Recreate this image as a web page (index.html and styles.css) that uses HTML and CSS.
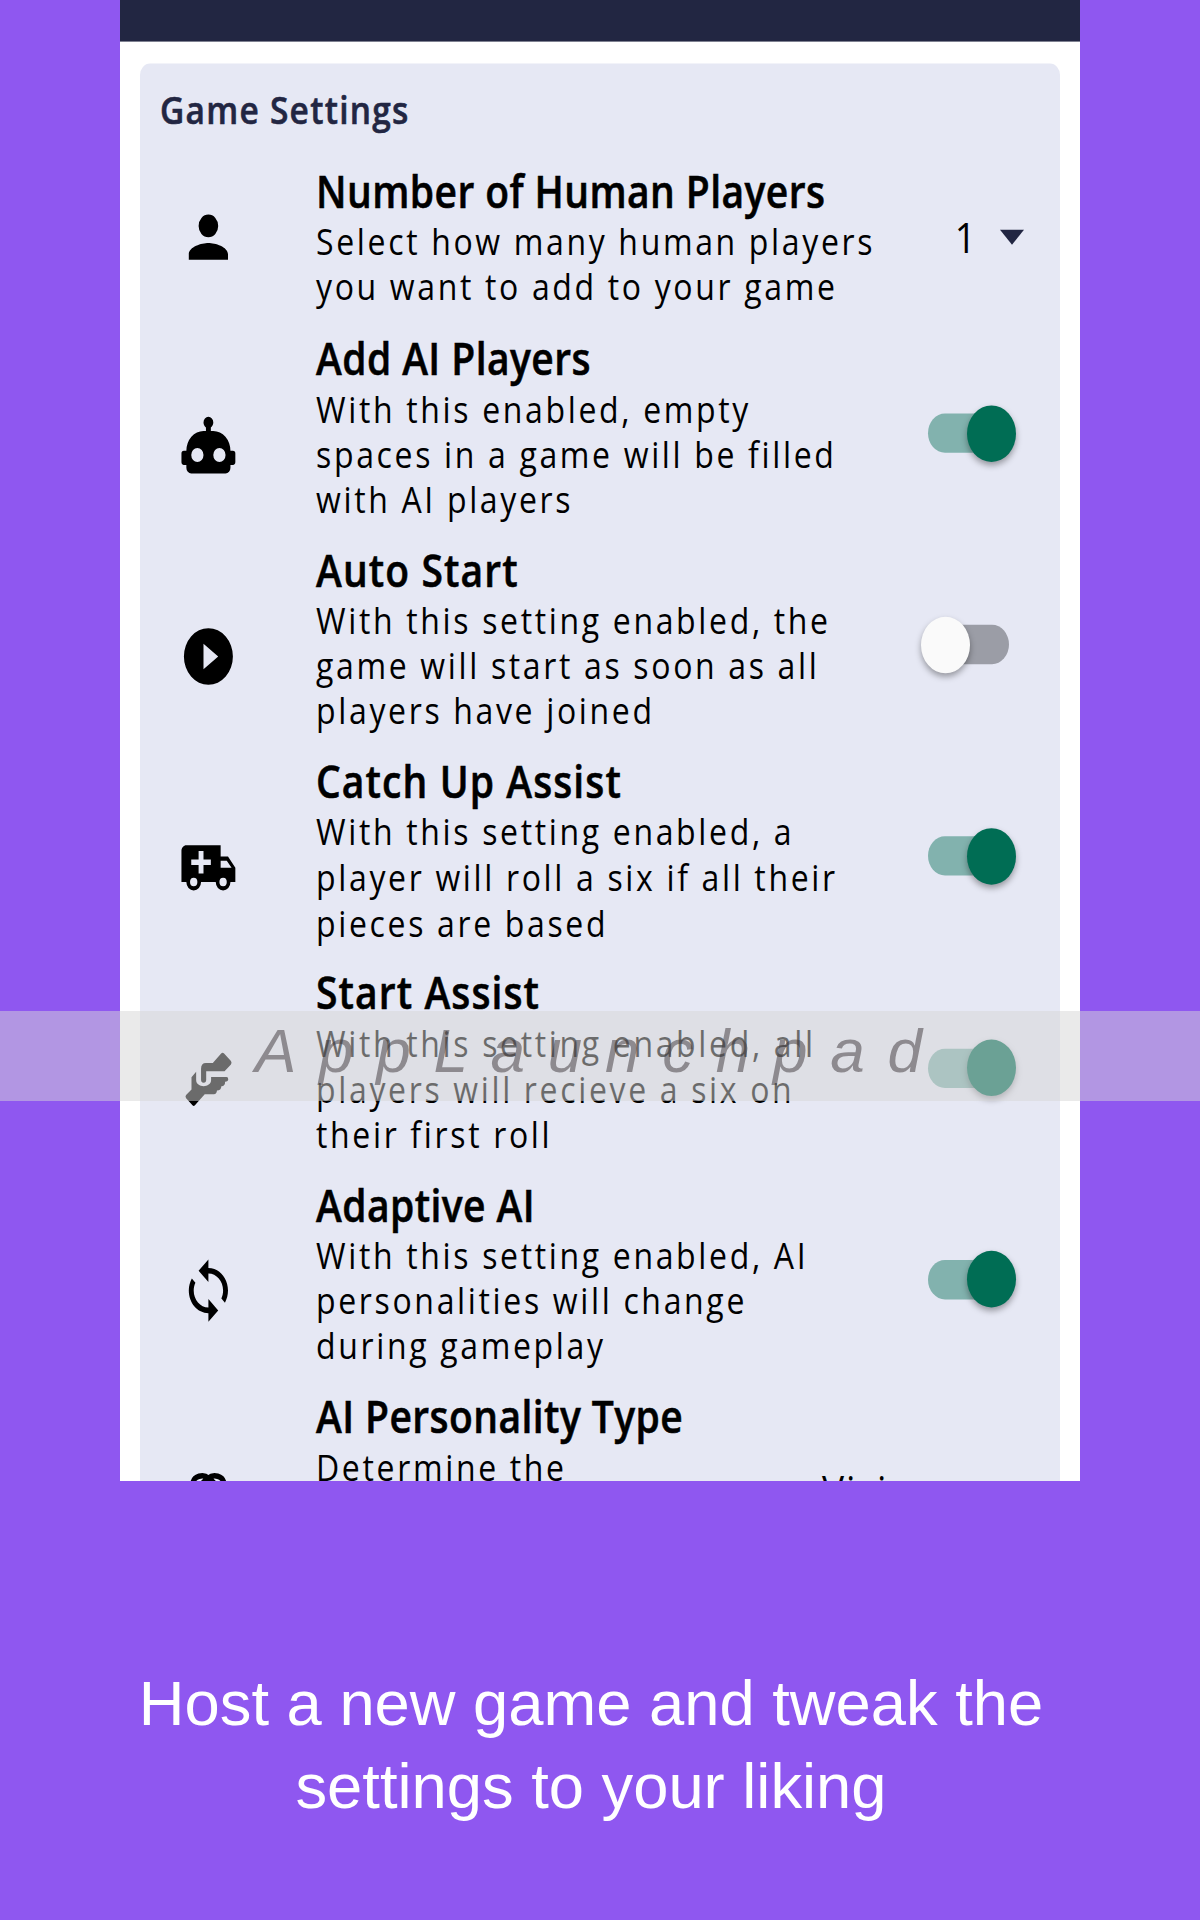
FILE: index.html
```html
<!DOCTYPE html>
<html lang="en">
<head>
<meta charset="utf-8">
<title>Game Settings</title>
<link rel="stylesheet" href="styles.css">
</head>
<body>
<div class="page">
  <main class="screen">
    <div class="app">
      <header class="topbar"></header>
      <section class="card">
        <h1 class="heading">Game Settings</h1>
        <article class="row short">
          <svg class="icon" viewBox="0 0 24 24"><path d="M12 12a4 4 0 1 0 0-8 4 4 0 0 0 0 8zm0 2c-2.67 0-8 1.34-8 4v2h16v-2c0-2.66-5.33-4-8-4z"/></svg>
          <div class="copy"><h2>Number of Human Players</h2><p>Select how many human players<br>you want to add to your game</p></div>
          <div class="select"><span>1</span><i class="caret"></i></div>
        </article>
        <article class="row">
          <svg class="icon" viewBox="0 0 24 24"><path d="M12,2A2,2 0 0,1 14,4C14,4.74 13.6,5.39 13,5.73V7H14A7,7 0 0,1 21,14H22A1,1 0 0,1 23,15V18A1,1 0 0,1 22,19H21V20A2,2 0 0,1 19,22H5A2,2 0 0,1 3,20V19H2A1,1 0 0,1 1,18V15A1,1 0 0,1 2,14H3A7,7 0 0,1 10,7H11V5.73C10.4,5.39 10,4.74 10,4A2,2 0 0,1 12,2M7.5,13A2.5,2.5 0 0,0 5,15.5A2.5,2.5 0 0,0 7.5,18A2.5,2.5 0 0,0 10,15.5A2.5,2.5 0 0,0 7.5,13M16.5,13A2.5,2.5 0 0,0 14,15.5A2.5,2.5 0 0,0 16.5,18A2.5,2.5 0 0,0 19,15.5A2.5,2.5 0 0,0 16.5,13Z"/></svg>
          <div class="copy"><h2>Add AI Players</h2><p>With this enabled, empty<br>spaces in a game will be filled<br>with AI players</p></div>
          <div class="toggle on"><i class="knob"></i></div>
        </article>
        <article class="row">
          <svg class="icon" viewBox="0 0 24 24"><path d="M12 2a10 10 0 1 0 0 20 10 10 0 0 0 0-20zm-2 14.5v-9l6 4.5z"/></svg>
          <div class="copy"><h2 class="loose">Auto Start</h2><p>With this setting enabled, the<br>game will start as soon as all<br>players have joined</p></div>
          <div class="toggle"><i class="knob"></i></div>
        </article>
        <article class="row">
          <svg class="icon" viewBox="0 0 24 24"><path d="M18,18.5A1.5,1.5 0 0,0 19.5,17A1.5,1.5 0 0,0 18,15.5A1.5,1.5 0 0,0 16.5,17A1.5,1.5 0 0,0 18,18.5M19.5,9.5H17V12H21.46L19.5,9.5M6,18.5A1.5,1.5 0 0,0 7.5,17A1.5,1.5 0 0,0 6,15.5A1.5,1.5 0 0,0 4.5,17A1.5,1.5 0 0,0 6,18.5M20,8L23,12V17H21A3,3 0 0,1 18,20A3,3 0 0,1 15,17H9A3,3 0 0,1 6,20A3,3 0 0,1 3,17H1V6C1,4.89 1.89,4 3,4H17V8H20M8,6V9H5V11H8V14H10V11H13V9H10V6H8Z"/></svg>
          <div class="copy"><h2 class="loose">Catch Up Assist</h2><p>With this setting enabled, a<br>player will roll a six if all their<br>pieces are based</p></div>
          <div class="toggle on"><i class="knob"></i></div>
        </article>
        <article class="row">
          <svg class="icon" viewBox="0 0 24 24"><path d="M17.2 2.9Q17.8 2.3 18.4 2.9L21.2 5.6Q21.7 6.2 21.2 6.8L18.6 9.2H11.1V12.2A1.05 1.05 0 0 1 9 12.2V8.3Q9 6.3 11 6.3H13.8ZM7 9.4V12.3C7 15.2 13.1 15.2 13.1 12.3V11.2H19.4Q20.1 11.2 20.1 12 20.1 12.8 18.8 12.9 18.9 14.4 17.3 14.5 17.2 16 15.5 16 15.4 17.3 14.2 17.3H10.5L6.5 21.2Q6 21.7 5.5 21.2L2.9 18.7Q2.4 18.1 2.9 17.6L5.1 15.6V11.3Z"/></svg>
          <div class="copy"><h2 class="loose">Start Assist</h2><p>With this setting enabled, all<br>players will recieve a six on<br>their first roll</p></div>
          <div class="toggle on"><i class="knob"></i></div>
        </article>
        <article class="row">
          <svg class="icon" viewBox="0 0 24 24"><path d="M12 4V1L8 5l4 4V6c3.31 0 6 2.69 6 6 0 1.01-.25 1.97-.7 2.8l1.46 1.46C19.54 15.03 20 13.57 20 12c0-4.42-3.58-8-8-8zm0 14c-3.31 0-6-2.69-6-6 0-1.01.25-1.97.7-2.8L5.24 7.74C4.46 8.97 4 10.43 4 12c0 4.42 3.58 8 8 8v3l4-4-4-4v3z"/></svg>
          <div class="copy"><h2>Adaptive AI</h2><p>With this setting enabled, AI<br>personalities will change<br>during gameplay</p></div>
          <div class="toggle on"><i class="knob"></i></div>
        </article>
        <article class="row last">
          <svg class="icon" viewBox="0 0 24 24"><path class="stroke" d="M12 3.6C10 2 6 2.8 5.6 5.4 3 6 2.5 10 4.5 11.5 2.5 15 5 18 8 17.5 10 21 14 21 16 17.5 19 18 21.5 15 19.5 11.5 21.5 10 21 6 18.4 5.4 18 2.8 14 2 12 3.6ZM9 6.5Q9.6 4.7 12 3.8M15 6.5Q14.4 4.7 12 3.8"/></svg>
          <div class="copy"><h2>AI Personality Type</h2><p>Determine the</p></div>
          <div class="select"><span>Vicious</span></div>
        </article>
      </section>
    </div>
  </main>
  <p class="caption">Host a new game and tweak the<br>settings to your liking</p>
  <div class="watermark">AppLaunchpad</div>
</div>
</body>
</html>
```
FILE: styles.css
```css
* { box-sizing: border-box; margin: 0; padding: 0; }
body { background: #8f57f0; }
.page { position: relative; width: 1200px; height: 1920px; overflow: hidden; }

.screen { width: 960px; height: 1481px; margin: 0 auto; overflow: hidden; background: #fff; }
/* the app view is stretched vertically to fill the frame */
.app { height: 1283px; transform: scaleY(1.155); transform-origin: 0 0; font-family: "Open Sans", "Noto Sans", sans-serif; color: #000; }
.topbar { height: 35.5px; background: #222642; }
.card { margin: 19.7px 20px 0; height: 1300px; padding: 0 20px; border-radius: 10px 10px 0 0; background: #e6e8f4; }
.heading { height: 86px; padding-top: 18px; font-size: 33.5px; line-height: 43px; font-weight: 600; letter-spacing: 1.25px; color: #222642; -webkit-text-stroke: .5px #222642; white-space: nowrap; }

.row { display: grid; grid-template-columns: 156px 1fr auto; align-items: start; height: 183.2px; }
.row.short { height: 144.6px; }
.icon { width: 58.8px; height: 58.8px; margin: 69.8px 0 0 19px; fill: #000; }
.short .icon { margin-top: 34.6px; }
.last .icon { margin-top: 69px; }
.stroke { fill: none; stroke: #000; stroke-width: 2; }
.copy { width: 0; white-space: nowrap; }
h2 { font-size: 39px; line-height: 48px; font-weight: 600; letter-spacing: .42px; -webkit-text-stroke: .5px #000; }
h2.loose { letter-spacing: 1.1px; }
.copy p { font-size: 32px; line-height: 39.25px; letter-spacing: 2.65px; }

.select { display: flex; align-items: center; gap: 24px; margin: 39px 16px 0 0; font-size: 37px; line-height: 50px; }
.last .select { width: 218px; margin: 63.5px 0 0; letter-spacing: 2px; }
.caret { border: 12px solid transparent; border-top-width: 13px; border-top-color: #222642; border-bottom: 0; }

.toggle { position: relative; width: 81px; height: 34px; margin: 72.3px 30.7px 0 0; border-radius: 17px; background: #9b9da6; }
.knob { position: absolute; left: -7px; top: -7.5px; width: 49px; height: 49px; border-radius: 50%; background: #fafafa; box-shadow: 0 3px 6px rgba(0,0,0,.35); }
.toggle.on { background: #82b2ae; }
.toggle.on .knob { left: 39px; background: #006d54; }

.caption { margin-top: 181px; padding-right: 18px; text-align: center; color: #fff; font: 63.3px/83px "Liberation Sans", Arial, sans-serif; white-space: nowrap; }
.watermark { position: absolute; left: 0; top: 1011px; width: 1200px; height: 90px; padding-left: 255px; background: rgba(214,214,214,.5); color: rgba(60,54,58,.5); font: italic 62px/80px "Liberation Sans", Arial, sans-serif; letter-spacing: 22.7px; white-space: nowrap; }
```
